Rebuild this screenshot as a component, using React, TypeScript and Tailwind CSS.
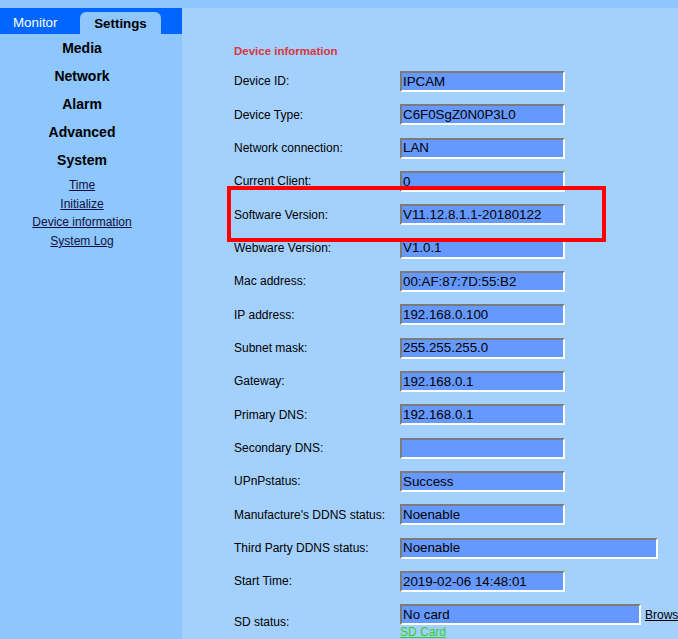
const rows: { label: string; value: string; width?: string }[] = [
  { label: 'Device ID:', value: 'IPCAM' },
  { label: 'Device Type:', value: 'C6F0SgZ0N0P3L0' },
  { label: 'Network connection:', value: 'LAN' },
  { label: 'Current Client:', value: '0' },
  { label: 'Software Version:', value: 'V11.12.8.1.1-20180122' },
  { label: 'Webware Version:', value: 'V1.0.1' },
  { label: 'Mac address:', value: '00:AF:87:7D:55:B2' },
  { label: 'IP address:', value: '192.168.0.100' },
  { label: 'Subnet mask:', value: '255.255.255.0' },
  { label: 'Gateway:', value: '192.168.0.1' },
  { label: 'Primary DNS:', value: '192.168.0.1' },
  { label: 'Secondary DNS:', value: '' },
  { label: 'UPnPstatus:', value: 'Success' },
  { label: "Manufacture's DDNS status:", value: 'Noenable' },
  { label: 'Third Party DDNS status:', value: 'Noenable', width: 'w-[258px]' },
  { label: 'Start Time:', value: '2019-02-06 14:48:01' },
]

const menu = ['Media', 'Network', 'Alarm', 'Advanced', 'System']
const links = ['Time', 'Initialize', 'Device information', 'System Log']

function Field({ value, width = 'w-[165px]' }: { value: string; width?: string }) {
  return (
    <div
      className={`${width} h-[21px] flex items-center pl-px bg-[#6699ff] border-2 border-t-[#7b7b7b] border-l-[#7b7b7b] border-b-white border-r-white text-[13.33px] leading-none text-black whitespace-nowrap overflow-hidden`}
    >
      {value}
    </div>
  )
}

export default function App() {
  return (
    <div
      className="w-[678px] h-[639px] overflow-hidden bg-[#8ec6fe] pt-[8px] flex"
      style={{ fontFamily: '"Liberation Sans", Arial, sans-serif' }}
    >
      <aside className="w-[182px] shrink-0 flex flex-col">
        <div className="h-[26px] bg-[#0066ff] flex items-end">
          <div className="w-[80px] h-[26px] flex items-center pl-[13px] pt-[4px] text-[13.33px] text-white">
            Monitor
          </div>
          <div className="w-[81px] h-[22px] rounded-t-[6px] bg-[#8ec6fe] flex items-center justify-center pt-[1px] text-[13.33px] font-bold text-black">
            Settings
          </div>
        </div>
        <nav className="w-[164px] flex flex-col items-center">
          {menu.map((m) => (
            <div key={m} className="h-[28px] flex items-center text-[14px] font-bold text-black">
              {m}
            </div>
          ))}
          <div className="mt-[1.67px] flex flex-col items-center">
            {links.map((l) => (
              <a
                key={l}
                href="#"
                className="h-[18.67px] flex items-center text-[12px] text-[#10103a] underline"
              >
                {l}
              </a>
            ))}
          </div>
        </nav>
      </aside>

      <main className="relative flex-1 bg-[#a4d0fe] pl-[52px] pt-[37px]">
        <h2 className="h-[14px] flex items-center text-[11.5px] font-bold text-[#d9363e]">
          Device information
        </h2>
        <div className="mt-[5.83px] flex flex-col">
          {rows.map((r) => (
            <div key={r.label} className="h-[33.33px] flex items-center">
              <span className="w-[166px] shrink-0 text-[12px] text-black whitespace-nowrap">{r.label}</span>
              <Field value={r.value} width={r.width} />
            </div>
          ))}
          <div className="mt-[6.17px] flex items-center">
            <span className="w-[166px] shrink-0 text-[12px] text-black">SD status:</span>
            <div className="flex flex-col">
              <div className="flex items-center">
                <Field value="No card" width="w-[241px]" />
                <a href="#" className="ml-[4px] text-[12px] text-black underline whitespace-nowrap">
                  Brows
                </a>
              </div>
              <a href="#" className="h-[14px] flex items-center text-[12px] text-[#33cc33] underline">
                SD Card
              </a>
            </div>
          </div>
        </div>

        <div className="absolute left-[45px] top-[178px] w-[379px] h-[56px] border-4 border-[#ff0000]" />
      </main>
    </div>
  )
}
